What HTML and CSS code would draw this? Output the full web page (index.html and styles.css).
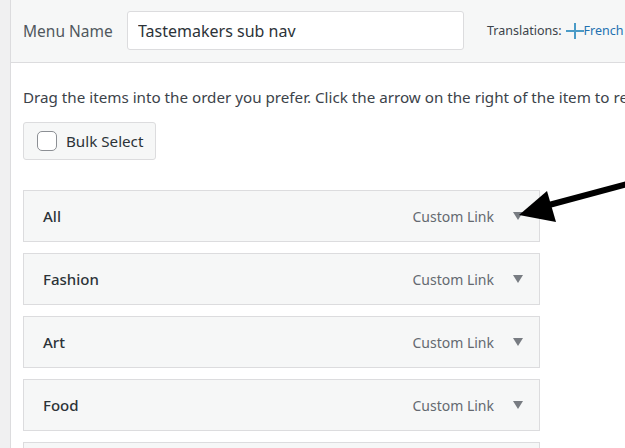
FILE: index.html
```html
<!DOCTYPE html>
<html lang="en">
<head>
    <meta charset="UTF-8">
    <title>Menu structure</title>
    <link rel="stylesheet" href="styles.css">
</head>
<body>
    <div class="page">
        <div class="side-strip"></div>
        <div class="main">
            <div class="menu-header">
                <label class="menu-label" for="menuName">Menu Name</label>
                <input type="text" id="menuName" class="menu-name" value="Tastemakers sub nav">
                <div class="translations">
                    Translations:
                    <span class="plus"></span><a href="#">French</a>
                </div>
            </div>

            <div class="menu-body">
                <p class="hint">Drag the items into the order you prefer. Click the arrow on the right of the item to reveal additional configuration options.</p>

                <label class="bulk-btn">
                    <span class="bulk-check"></span>
                    Bulk Select
                </label>

                <ul class="menu-items">
                    <li class="menu-item"><span class="item-title">All</span><span class="item-type">Custom Link</span><span class="item-toggle"></span></li>
                    <li class="menu-item"><span class="item-title">Fashion</span><span class="item-type">Custom Link</span><span class="item-toggle"></span></li>
                    <li class="menu-item"><span class="item-title">Art</span><span class="item-type">Custom Link</span><span class="item-toggle"></span></li>
                    <li class="menu-item"><span class="item-title">Food</span><span class="item-type">Custom Link</span><span class="item-toggle"></span></li>
                    <li class="menu-item"><span class="item-title">Music</span><span class="item-type">Custom Link</span><span class="item-toggle"></span></li>
                </ul>
            </div>
        </div>

        <!-- annotation arrow pointing at the first toggle -->
        <svg class="callout" width="110" height="45" viewBox="0 0 110 45">
            <line x1="110" y1="4" x2="32" y2="25" stroke="#000" stroke-width="6"/>
            <polygon points="2,35 30,11 39,42" fill="#000"/>
        </svg>
    </div>
</body>
</html>
```

FILE: styles.css
```css
* {
    box-sizing: border-box;
    margin: 0;
    padding: 0;
}

body {
    background: #fff;
    color: #3c434a;
    font-family: 'Noto Sans', 'Open Sans', sans-serif;
    overflow: hidden;
}

.page {
    position: relative;
    display: flex;
    height: 448px;
    overflow: hidden;
}

.side-strip {
    width: 11px;
    flex-shrink: 0;
    background: #f0f0f1;
    border-right: 1px solid #dcdcde;
}

.main {
    flex: 1;
    min-width: 0;
}

.menu-header {
    display: flex;
    align-items: center;
    height: 63px;
    padding: 0 0 1px 12px;
    background: #f6f7f7;
    border-bottom: 1px solid #dcdcde;
    white-space: nowrap;
}

.menu-label {
    font-size: 15.5px;
    color: #50575e;
    width: 104px;
}

.menu-name {
    width: 337px;
    height: 39px;
    padding: 0 10px;
    border: 1px solid #dcdcde;
    border-radius: 3px;
    background: #fff;
    font-family: inherit;
    font-size: 16px;
    color: #2c3338;
    outline: none;
}

.translations {
    margin-left: 23px;
    font-size: 12.5px;
    color: #3c434a;
    display: flex;
    align-items: center;
}

.translations a {
    color: #2271b1;
    text-decoration: none;
}

.plus {
    position: relative;
    width: 18px;
    height: 16px;
    margin-left: 4px;
}

.plus::before,
.plus::after {
    content: "";
    position: absolute;
    background: #4a9bc7;
}

.plus::before {
    left: 0;
    right: 0;
    top: 7px;
    height: 2px;
}

.plus::after {
    top: 0;
    bottom: 0;
    left: 8px;
    width: 2px;
}

.menu-body {
    padding: 24px 0 0 12px;
}

.hint {
    font-size: 15.2px;
    color: #3c434a;
    white-space: nowrap;
    line-height: 20px;
}

.bulk-btn {
    display: inline-flex;
    align-items: center;
    margin-top: 15px;
    height: 38px;
    padding: 0 12px 0 13px;
    background: #f6f7f7;
    border: 1px solid #dcdcde;
    border-radius: 3px;
    font-size: 15.2px;
    color: #2c3338;
}

.bulk-check {
    width: 20px;
    height: 20px;
    margin-right: 9px;
    background: #fff;
    border: 1px solid #8c8f94;
    border-radius: 5px;
}

.menu-items {
    list-style: none;
    margin-top: 30px;
    width: 517px;
}

.menu-item {
    display: flex;
    align-items: center;
    height: 52px;
    margin-bottom: 11px;
    padding: 0 16px 0 19px;
    background: #f6f7f7;
    border: 1px solid #dcdcde;
}

.item-title {
    flex: 1;
    font-size: 15px;
    font-weight: 500;
    color: #2c3338;
}

.item-type {
    font-size: 14px;
    color: #646970;
}

.item-toggle {
    width: 0;
    height: 0;
    margin-left: 19px;
    border-left: 5px solid transparent;
    border-right: 5px solid transparent;
    border-top: 8px solid #787c82;
}

.callout {
    position: absolute;
    left: 517px;
    top: 180px;
}
```
